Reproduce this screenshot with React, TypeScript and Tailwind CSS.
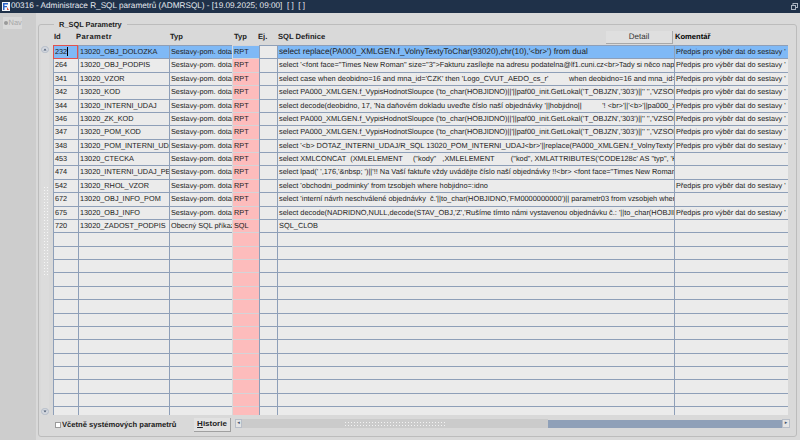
import React, { FC } from "react";

type RowData = {
  id?: string;
  param?: string;
  typ?: string;
  kind?: string;
  sql?: string;
  note?: string;
};

const NOTE = "Předpis pro výběr dat do sestavy '";

const rows: RowData[] = [
  { id: "232", param: "13020_OBJ_DOLOZKA", typ: "Sestavy-pom. dotaz", kind: "RPT", sql: "select replace(PA000_XMLGEN.f_VolnyTextyToChar(93020),chr(10),'<br>') from dual", note: NOTE },
  { id: "264", param: "13020_OBJ_PODPIS", typ: "Sestavy-pom. dotaz", kind: "RPT", sql: "select '<font face=\"Times New Roman\" size=\"3\">Fakturu zasílejte na adresu podatelna@lf1.cuni.cz<br>Tady si něco napíšeme", note: NOTE },
  { id: "341", param: "13020_VZOR", typ: "Sestavy-pom. dotaz", kind: "RPT", sql: "select case when deobidno=16 and mna_id='CZK' then 'Logo_CVUT_AEDO_cs_r'          when deobidno=16 and mna_id='EUR'", note: NOTE },
  { id: "342", param: "13020_KOD", typ: "Sestavy-pom. dotaz", kind: "RPT", sql: "select PA000_XMLGEN.f_VypisHodnotSloupce ('to_char(HOBJIDNO)||'||paf00_init.GetLokal('T_OBJZN','303')||'' '','VZSOBJEH'", note: NOTE },
  { id: "344", param: "13020_INTERNI_UDAJ", typ: "Sestavy-pom. dotaz", kind: "RPT", sql: "select decode(deobidno, 17, 'Na daňovém dokladu uveďte číslo naší objednávky '||hobjidno||          '! <br>'||'<b>'||pa000_xmlgen", note: NOTE },
  { id: "346", param: "13020_ZK_KOD", typ: "Sestavy-pom. dotaz", kind: "RPT", sql: "select PA000_XMLGEN.f_VypisHodnotSloupce ('to_char(HOBJIDNO)||'||paf00_init.GetLokal('T_OBJZN','303')||'' '','VZSOBJEH'", note: NOTE },
  { id: "347", param: "13020_POM_KOD", typ: "Sestavy-pom. dotaz", kind: "RPT", sql: "select PA000_XMLGEN.f_VypisHodnotSloupce ('to_char(HOBJIDNO)||'||paf00_init.GetLokal('T_OBJZN','303')||'' '','VZSOBJEH'", note: NOTE },
  { id: "348", param: "13020_POM_INTERNI_UDAJ", typ: "Sestavy-pom. dotaz", kind: "RPT", sql: "select '<b> DOTAZ_INTERNI_UDAJ/R_SQL 13020_POM_INTERNI_UDAJ<br>'||replace(PA000_XMLGEN.f_VolnyTextyToChar(93020)", note: NOTE },
  { id: "453", param: "13020_CTECKA", typ: "Sestavy-pom. dotaz", kind: "RPT", sql: "select XMLCONCAT  (XMLELEMENT     (\"kody\"   ,XMLELEMENT        (\"kod\", XMLATTRIBUTES('CODE128c' AS \"typ\", 'HS" },
  { id: "474", param: "13020_INTERNI_UDAJ_PEN", typ: "Sestavy-pom. dotaz", kind: "RPT", sql: "select lpad(' ',176,'&nbsp; ')||'!! Na Vaší faktuře vždy uvádějte číslo naší objednávky !!<br> <font face=\"Times New Roman\"" },
  { id: "542", param: "13020_RHOL_VZOR", typ: "Sestavy-pom. dotaz", kind: "RPT", sql: "select 'obchodni_podminky' from tzsobjeh where hobjidno=:idno", note: NOTE },
  { id: "672", param: "13020_OBJ_INFO_POM", typ: "Sestavy-pom. dotaz", kind: "RPT", sql: "select 'interní návrh neschválené objednávky  č.'||to_char(HOBJIDNO,'FM0000000000')|| parametr03 from vzsobjeh where" },
  { id: "675", param: "13020_OBJ_INFO", typ: "Sestavy-pom. dotaz", kind: "RPT", sql: "select decode(NADRIDNO,NULL,decode(STAV_OBJ,'Z','Rušíme tímto námi vystavenou objednávku č.: '||to_char(HOBJIDNO", note: NOTE },
  { id: "720", param: "13020_ZADOST_PODPIS", typ: "Obecný SQL příkaz", kind: "SQL", sql: "SQL_CLOB" },
  ...Array.from({ length: 14 }, () => ({})),
];

const GRID = "grid grid-cols-[25px_91px_63px_1px_26px_18px_397px_114px]";

const Cell: FC<{ text?: string; active?: boolean; className?: string }> = ({ text, active, className }) => (
  <div
    className={`h-full overflow-hidden whitespace-pre border-t border-t-[#8e9fb8] border-l border-l-[#8e9fb8] pl-[1px] leading-[12.5px] ${
      active ? "bg-[#7fb9f6]" : "bg-[#ebebeb]"
    } ${className ?? ""}`}
  >
    {text}
  </div>
);

const Row: FC<{ row: RowData; first: boolean }> = ({ row, first }) => (
  <div className={`${GRID} h-[13.38px] text-[7.3px] text-[#222]`}>
    {first ? (
      <div className="relative h-full border border-[#e0524f] bg-[#7fb9f6] pl-[1px] leading-[11.5px]">
        {row.id}
        <span className="absolute left-[13px] top-[1px] h-[9px] w-px bg-black" />
      </div>
    ) : (
      <Cell text={row.id} />
    )}
    <Cell text={row.param} active={first} />
    <Cell text={row.typ} active={first} />
    <div />
    <div
      className={`h-full border-t border-t-[#d4d4d8] pl-[1px] leading-[12.5px] ${
        first ? "bg-[#7fb9f6]" : "bg-[#fdbcbc]"
      }`}
    >
      {row.kind}
    </div>
    <Cell />
    <Cell text={row.sql} active={first} className={first ? "text-[8.2px]" : "text-[7.4px]"} />
    <Cell text={row.note} active={first} />
  </div>
);

const VScrollbar: FC = () => (
  <div className="mr-[4px] mt-[1px] flex h-[369px] w-[8px] flex-col items-center bg-[#dcdcdc]">
    <svg width="8" height="7" viewBox="0 0 8 7">
      <rect x="0.5" y="0.5" width="7" height="6" rx="3" fill="#d3d7de" stroke="#b4bcc8" />
      <path d="M2.5 4.5 4 2.5l1.5 2z" fill="#4a5a72" />
    </svg>
    <div className="flex flex-1 items-center justify-center">
      <div className="h-[90px] w-[5px] bg-[radial-gradient(#f6f6f6_35%,transparent_40%)] bg-[length:3px_3px]" />
    </div>
    <svg width="8" height="7" viewBox="0 0 8 7">
      <rect x="0.5" y="0.5" width="7" height="6" rx="3" fill="#d3d7de" stroke="#b4bcc8" />
      <path d="M2.5 2.5 4 4.5l1.5-2z" fill="#4a5a72" />
    </svg>
  </div>
);

const App: FC = () => {
  return (
    <div className="flex h-[440px] w-[800px] flex-col overflow-hidden bg-[#d9d9d9] font-['Liberation_Sans',Arial,sans-serif] text-black [text-rendering:geometricPrecision]">
      {/* title bar */}
      <div className="flex h-[13px] items-center bg-[#1f3149] pl-[2px] pr-[2px] text-[8.2px] text-[#e4e8ee]">
        <svg width="8" height="9" viewBox="0 0 8 9" className="mr-[1px] shrink-0">
          <rect width="8" height="9" fill="#f4f7fb" />
          <path d="M1 1h5v1.5H2.5v1.5H5v1.3H2.5V8H1z" fill="#2a63c8" />
          <path d="M5 5l2 3H5z" fill="#d9503f" />
        </svg>
        <span className="whitespace-pre">{"00316 - Administrace R_SQL parametrů (ADMRSQL) - [19.09.2025; 09:00]  [ ]  [ ]"}</span>
        <svg width="7" height="7" viewBox="0 0 7 7" className="ml-auto">
          <rect x="2" y="0.5" width="4.5" height="4" fill="none" stroke="#aab4c2" />
          <rect x="0.5" y="2.5" width="4" height="4" fill="#1f3149" stroke="#aab4c2" />
        </svg>
      </div>

      <div className="flex flex-1">
        {/* navigator strip */}
        <div className="w-[36px] shrink-0 bg-[#cdcdcd] pl-[3px] pt-[4px]">
          <div className="flex h-[12px] w-[19px] items-center gap-[1px] bg-[#d9d9d9] pl-[0.5px] text-[7.5px] text-[#a8a8a8]">
            <span className="h-[4px] w-[4px] rounded-full bg-[#9a9a9a]" />
            Nav
          </div>
        </div>

        {/* main frame */}
        <div className="flex-1 pl-[2px] pr-[3px] pt-[11px]">
          <div className="relative h-[413px] rounded-[3px] border border-[#bcbcbc] pl-[2px] pt-[3px]">
            <div className="absolute left-[15px] top-[-5px] bg-[#d9d9d9] px-[5px] text-[7.4px] font-bold leading-[10px] text-[#222]">
              R_SQL Parametry
            </div>

            {/* header */}
            <div className={`${GRID} ml-[12px] h-[17px] items-center pt-[1px] text-[7.6px] font-bold text-[#222]`}>
              <span className="pl-[1px]">Id</span>
              <span className="-ml-[2px] tracking-[0.4px]">Parametr</span>
              <span className="pl-[1px]">Typ</span>
              <span />
              <span className="pl-[1px]">Typ</span>
              <span className="-ml-[1px]">Ej.</span>
              <div className="flex h-full items-center justify-between pl-[1px]">
                <span>SQL Definice</span>
                <span className="mr-[1px] flex h-[13px] w-[67px] items-center justify-center border-b border-r border-[#a8a8a8] bg-[#dfdfdf] text-[8px] font-normal text-[#333]">
                  Detail
                </span>
              </div>
              <span className="pl-[1px] text-black">Komentář</span>
            </div>

            <div className="flex">
              <VScrollbar />
              <div className="h-[370px] w-[735px] overflow-hidden">
                {rows.map((row, i) => (
                  <Row key={i} row={row} first={i === 0} />
                ))}
              </div>
            </div>

            {/* bottom bar */}
            <div className="mt-[1px] flex h-[17px] items-center pl-[14px]">
              <span className="h-[6px] w-[6px] border border-[#9a9a9a] bg-white" />
              <span className="ml-[1px] w-[132px] text-[7.6px] font-bold text-[#222]">Včetně systémových parametrů</span>
              <button className="h-[14px] w-[37px] border-b border-r border-[#a0a0a0] bg-[#e2e2e2] text-[8px] font-bold leading-none text-[#222]">
                <span className="underline">H</span>istorie
              </button>
              <div className="-mt-[2px] ml-[4px] flex h-[9px] w-[555px] items-center">
                <div className="flex h-[9px] w-[7px] items-center justify-center border border-[#b8bec8] bg-[#e4e4e4] text-[5px] leading-none text-[#44546c]">◂</div>
                <div className="flex h-[9px] w-[306px] items-center justify-center bg-[#cbcbcb]">
                  <div className="h-[5px] w-[102px] bg-[radial-gradient(#f3f3f3_35%,transparent_40%)] bg-[length:3px_3px]" />
                </div>
                <div className="h-[8px] flex-1 bg-[#8fa0b8]" />
                <div className="flex h-[9px] w-[8px] items-center justify-center border border-[#b8bec8] bg-[#e4e4e4] text-[5px] leading-none text-[#44546c]">▸</div>
              </div>
            </div>
          </div>
        </div>
      </div>
    </div>
  );
};

export default App;
